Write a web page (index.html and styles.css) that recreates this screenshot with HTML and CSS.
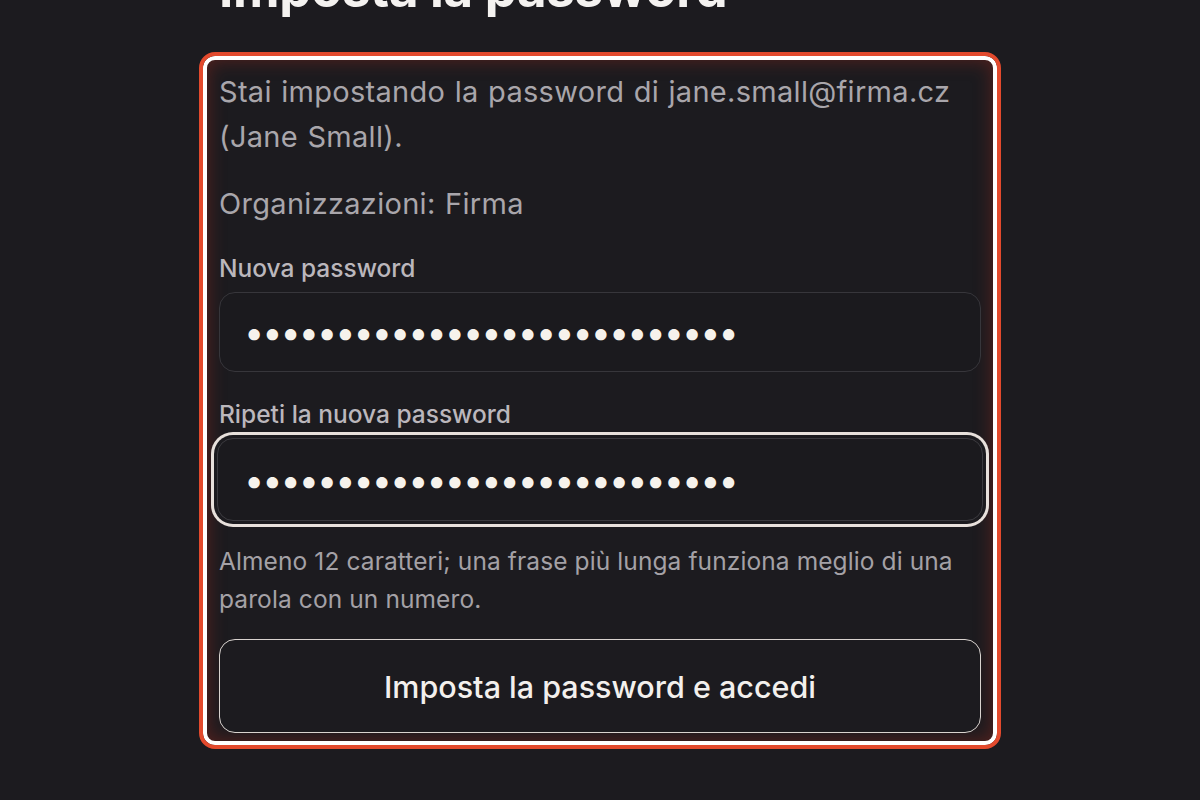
FILE: index.html
```html
<!DOCTYPE html>
<html lang="it">
<head>
<meta charset="utf-8">
<title>Imposta la password</title>
<link rel="stylesheet" href="styles.css">
</head>
<body>
<main class="page">
  <h1 class="title">Imposta la password</h1>
  <form class="card">
    <p class="intro">Stai impostando la password di jane.small@firma.cz (Jane Small).</p>
    <p class="org">Organizzazioni: Firma</p>
    <label class="label" for="pw1">Nuova password</label>
    <input class="field" id="pw1" type="password" value="abcdefghijklmnopqrstuvwxyza">
    <label class="label" for="pw2">Ripeti la nuova password</label>
    <input class="field field-focus" id="pw2" type="password" value="abcdefghijklmnopqrstuvwxyza">
    <p class="hint">Almeno 12 caratteri; una frase più lunga funziona meglio di una parola con un numero.</p>
    <button class="submit" type="button">Imposta la password e accedi</button>
  </form>
</main>
</body>
</html>
```

FILE: styles.css
```css
* { box-sizing: border-box; }
html, body {
  margin: 0;
  background: #1c1b1f;
  height: 100%;
  overflow: hidden;
}
body {
  font-family: Inter, "Noto Sans", sans-serif;
  color: #a9a6ab;
}
.page {
  width: 802px;
  margin: 0 auto;
}
.title {
  margin: -40px 0 34px 20px;
  font-size: 51px;
  line-height: 58px;
  font-weight: 700;
  color: #f4f2f0;
  letter-spacing: -0.3px;
}
.card {
  display: flex;
  flex-direction: column;
  border: 4px solid #e34a2d;
  border-radius: 16px;
  padding: 13px 16px 12px 16px;
  box-shadow: inset 0 0 0 4px #ffffff, inset 0 0 18px 5px rgba(150, 40, 28, 0.45);
  background: #1c1b1f;
}
.intro, .org {
  margin: 0 0 22px;
  font-size: 29px;
  line-height: 45px;
  letter-spacing: 0.3px;
  word-spacing: 1px;
  color: #a9a6ab;
}
.label {
  font-size: 24.5px;
  line-height: 32px;
  font-weight: 500;
  color: #bbb7bc;
  margin-top: 4px;
  margin-bottom: 8px;
}
.field {
  display: block;
  width: 100%;
  height: 80px;
  margin: 0 0 22px;
  padding: 0 24px;
  border: 1.5px solid #37363b;
  border-radius: 16px;
  background: #1b1a1e;
  color: #f6f2ec;
  font-family: Inter, "Noto Sans", sans-serif;
  font-size: 36px;
  letter-spacing: -2px;
  outline: none;
}
.field-focus {
  width: calc(100% + 4px);
  margin: 0 -2px 21px;
  height: 83px;
  padding: 0 26px;
  border-color: #3b3a3f;
  box-shadow: 0 0 0 3px #1c1b1f, 0 0 0 6px #e8e1dc;
}
.hint {
  margin: 0 0 21px;
  font-size: 24.5px;
  line-height: 38px;
  letter-spacing: 0.1px;
  color: #a4a1a6;
}
.submit {
  height: 94px;
  width: 100%;
  border: 1.5px solid #d9d3cf;
  border-radius: 16px;
  background: #1c1b1f;
  color: #f3f0ed;
  font-family: Inter, "Noto Sans", sans-serif;
  font-size: 30.5px;
  font-weight: 500;
  cursor: pointer;
}
```
